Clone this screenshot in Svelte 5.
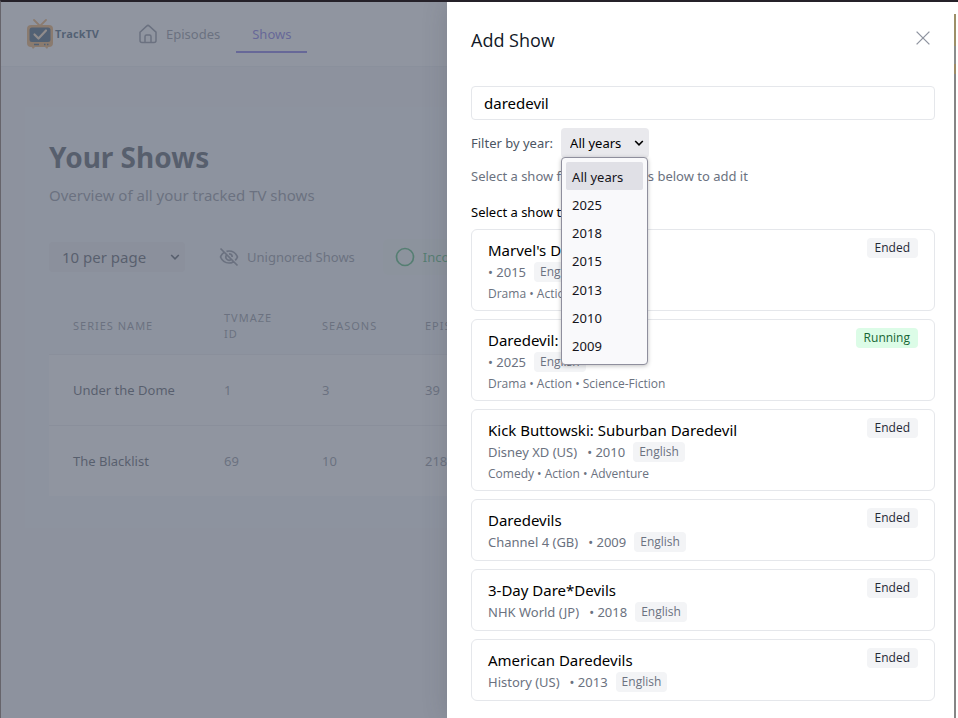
<script>
  const tracked = [
    { name: 'Under the Dome', id: 1, seasons: 3, episodes: 39 },
    { name: 'The Blacklist', id: 69, seasons: 10, episodes: 218 }
  ];
  const years = ['All years', '2025', '2018', '2015', '2013', '2010', '2009'];
  const results = [
    { title: "Marvel's Daredevil", network: '', year: 2015, status: 'Ended', genres: ['Drama', 'Action', 'Crime'] },
    { title: 'Daredevil: Born Again', network: '', year: 2025, status: 'Running', genres: ['Drama', 'Action', 'Science-Fiction'] },
    { title: 'Kick Buttowski: Suburban Daredevil', network: 'Disney XD (US)', year: 2010, status: 'Ended', genres: ['Comedy', 'Action', 'Adventure'] },
    { title: 'Daredevils', network: 'Channel 4 (GB)', year: 2009, status: 'Ended', genres: [] },
    { title: '3-Day Dare*Devils', network: 'NHK World (JP)', year: 2018, status: 'Ended', genres: [] },
    { title: 'American Daredevils', network: 'History (US)', year: 2013, status: 'Ended', genres: [] }
  ];
  let query = $state('daredevil');
  let year = $state('All years');
  let perPage = $state('10');
</script>

{#snippet chevron()}
  <svg class="chevron" viewBox="0 0 10 10" aria-hidden="true"><path d="M1.200 3l3.800 3.800L8.800 3" /></svg>
{/snippet}

<div class="app">
  <div class="page">
    <header>
      <a class="brand" href="#home">
        <svg viewBox="0 0 26 30" aria-hidden="true">
          <path d="M7 1l6 6 6-6" fill="none" stroke="#e8973f" stroke-width="1.8" stroke-linecap="round" />
          <rect x="0" y="6" width="26" height="22" rx="4" fill="#e8973f" />
          <path d="M4 27l2 3 2-2zM18 28l2 2 2-3z" fill="#e8973f" />
          <rect x="2.500" y="8.500" width="21" height="14.500" rx="2.500" fill="#0b3050" />
          <path d="M7.500 15.500l4 4 7.500-8" fill="none" stroke="#ffdcae" stroke-width="2.200" stroke-linecap="round" stroke-linejoin="round" />
          <path d="M7 25.500h5M17 25.500h1.500M20 25.500h1.500" stroke="#0b3050" stroke-width="1.400" />
        </svg>
        <span>TrackTV</span>
      </a>
      <nav>
        <a href="#episodes">
          <svg viewBox="0 0 20 20" aria-hidden="true"><path d="M2 8.200L8.600 2.100a2 2 0 0 1 2.800 0L18 8.200V16.500a2 2 0 0 1-2 2H4a2 2 0 0 1-2-2zM7 18.500V12.500a1.500 1.500 0 0 1 1.500-1.500h3a1.500 1.500 0 0 1 1.500 1.500v6" /></svg>
          Episodes
        </a>
        <a class="current" href="#shows">Shows</a>
      </nav>
    </header>
    <main>
      <h1>Your Shows</h1>
      <p class="lead">Overview of all your tracked TV shows</p>
      <div class="tools">
        <div class="select big">
          <select aria-label="Rows per page" bind:value={perPage}>
            <option value="10">10 per page</option>
            <option value="25">25 per page</option>
          </select>
          {@render chevron()}
        </div>
        <button class="tool">
          <svg viewBox="0 0 20 20" aria-hidden="true"><path d="M1.500 1.500l17 17M7.500 4.400A9 9 0 0 1 10 4c4 0 7 2.500 8.500 6a10 10 0 0 1-2.300 3.300M4.800 5.600A9.500 9.500 0 0 0 1.500 10c1.500 3.500 4.500 6 8.500 6a8.500 8.500 0 0 0 4.200-1.100M7.600 8a3.200 3.200 0 0 0 4.500 4.500M10 6.800a3.200 3.200 0 0 1 3.200 3.200" /></svg>
          Unignored Shows
        </button>
        <button class="tool green">
          <svg viewBox="0 0 20 20" aria-hidden="true"><circle cx="10" cy="10" r="8.500" /></svg>
          Incomplete
        </button>
      </div>
      <table>
        <thead>
          <tr><th class="name">Series name</th><th class="id">TVMaze ID</th><th class="seasons">Seasons</th><th>Episodes</th></tr>
        </thead>
        <tbody>
          {#each tracked as show}
            <tr><td class="title">{show.name}</td><td>{show.id}</td><td>{show.seasons}</td><td>{show.episodes}</td></tr>
          {/each}
        </tbody>
      </table>
    </main>
  </div>

  <div class="shade"></div>

  <aside class="drawer" aria-labelledby="drawer-title">
    <div class="head">
      <h2 id="drawer-title">Add Show</h2>
      <button class="close" aria-label="Close">
        <svg viewBox="0 0 14 14" aria-hidden="true"><path d="M.6.600l12.800 12.800M13.400.6L.6 13.400" /></svg>
      </button>
    </div>
    <input type="text" aria-label="Search shows" bind:value={query} />
    <div class="filter">
      <label for="year">Filter by year:</label>
      <div class="select">
        <select id="year" bind:value={year}>
          {#each years as y}<option>{y}</option>{/each}
        </select>
        {@render chevron()}
        <ul role="listbox" aria-label="Years">
          {#each years as y}<li role="option" aria-selected={y === year}>{y}</li>{/each}
        </ul>
      </div>
    </div>
    <p class="hint">Select a show from the results below to add it</p>
    <p class="prompt">Select a show to add</p>
    <div class="results">
      {#each results as r}
        <article>
          <div>
            <h3>{r.title}</h3>
            <p class="meta">
              {#if r.network}<span class="network">{r.network}</span>{/if}<span>• {r.year}</span><span class="lang">English</span>
            </p>
            {#if r.genres.length}<p class="genres">{r.genres.join(' • ')}</p>{/if}
          </div>
          <span class="badge" class:running={r.status === 'Running'}>{r.status}</span>
        </article>
      {/each}
    </div>
  </aside>
  <div class="edge"></div>
</div>

<style>
  :global(body) { margin: 0; overflow: hidden; }
  .app {
    box-sizing: border-box;
    position: relative;
    height: 100vh;
    overflow: hidden;
    border-top: 2px solid #252129;
    border-left: 1px solid #66646b;
    font-family: "Noto Sans", "Open Sans", sans-serif;
    font-size: 13px;
    line-height: 20px;
    color: #000;
  }
  h1, h2, h3, p, ul { margin: 0; padding: 0; font-weight: 400; }
  button, select, input { font: inherit; color: inherit; margin: 0; border: 0; background: none; }
  svg { fill: none; stroke: currentColor; flex: none; }

  .page { height: 100%; background: #f3f4f6; color: #6b7280; }
  header { display: flex; height: 64px; padding-left: 26px; background: #fff; border-bottom: 1px solid #e8eaee; }
  .brand { display: flex; align-items: center; gap: 2px; width: 111px; color: #0b3050; font-family: "Open Sans", sans-serif; font-size: 11px; font-weight: 700; text-decoration: none; }
  .brand svg { width: 26px; height: 30px; stroke: none; }
  nav { display: flex; gap: 16px; height: 51px; }
  nav a { display: flex; align-items: center; gap: 8px; padding-top: 15px; color: #6b7280; text-decoration: none; border-bottom: 2px solid transparent; box-sizing: border-box; }
  nav svg { width: 20px; height: 20px; stroke-width: 1.500; }
  nav .current { padding-left: 16px; padding-right: 16px; color: #5b4be0; border-color: #5b4be0; }
  main { margin: 40px 24px 0; padding: 32px 24px; background: #f3f6f9; }
  h1 { font-size: 28px; line-height: 36px; font-weight: 700; color: #1f2937; }
  .lead { margin-top: 10px; font-size: 15px; line-height: 20px; }
  .tools { display: flex; align-items: center; margin-top: 34px; height: 36px; }
  .select { position: relative; height: 30px; }
  .select select { appearance: none; height: 100%; width: 100%; border-radius: 4px; background: #e9e9ed; }
  .chevron { position: absolute; right: 5px; top: 10px; width: 10px; height: 10px; stroke-width: 1.600; pointer-events: none; }
  .big { width: 136px; color: #1f2937; font-size: 15px; }
  .big select { padding: 0 13px; }
  .tool { display: flex; align-items: center; gap: 8px; height: 36px; padding: 0 12px; margin-left: 22px; white-space: nowrap; }
  .tool svg { width: 20px; height: 20px; stroke-width: 1.700; }
  .green { margin-left: 16px; color: #16a34a; background: #eef8f2; border-radius: 6px; }
  table { width: 100%; margin-top: 23px; border-collapse: collapse; table-layout: fixed; text-align: left; }
  th { height: 56px; box-sizing: border-box; padding: 0 24px; font-size: 11px; line-height: 16px; font-weight: 400; letter-spacing: 1px; text-transform: uppercase; }
  .name { width: 151px; }
  .id { width: 98px; }
  .seasons { width: 103px; }
  td { height: 70px; padding: 0 24px; background: #fff; border-top: 1px solid #e5e7eb; }
  .title { color: #1f2937; }

  .shade { position: absolute; inset: 0; background: rgba(107, 114, 128, 0.75); }

  .drawer { position: absolute; top: 0; right: 0; bottom: 0; box-sizing: border-box; width: 511px; max-width: 100%; padding: 24px 23px 0 24px; background: #fff; box-shadow: 0 0 24px rgba(60, 60, 70, 0.2); }
  .head { display: flex; justify-content: space-between; height: 60px; }
  h2 { font-family: "Open Sans", sans-serif; font-size: 18px; line-height: 28px; color: #111827; }
  .close { width: 24px; height: 24px; padding: 0; color: #8f94a0; display: flex; align-items: center; justify-content: center; }
  .close svg { width: 14px; height: 14px; stroke-width: 1.300; }
  input { box-sizing: border-box; width: 100%; height: 34px; padding: 0 12px; border: 1px solid #e5e7eb; border-radius: 4px; font-size: 15px; }
  .filter { display: flex; align-items: center; gap: 8px; margin-top: 8px; color: #4b5563; }
  .filter .select { width: 88px; color: #000; }
  .filter select { padding: 0 9px; }
  ul { position: absolute; z-index: 1; top: 29px; left: 0; display: grid; box-sizing: border-box; width: 87px; height: 208px; padding: 4px; border: 1px solid #8f8f9d; border-radius: 4px; background: #f9f9fb; box-shadow: 0 1px 4px rgba(0, 0, 0, 0.25); list-style: none; color: #15141a; }
  li { display: flex; align-items: center; padding: 1px 6px 0; border-radius: 2px; }
  li[aria-selected="true"] { background: #e0e0e6; }
  .hint { margin-top: 8px; color: #6b7280; }
  .prompt { margin-top: 16px; }
  .results { display: flex; flex-direction: column; gap: 8px; margin-top: 7px; }
  article { display: flex; justify-content: space-between; align-items: flex-start; padding: 8px 16px; border: 1px solid #e5e7eb; border-radius: 6px; }
  h3 { font-size: 15px; line-height: 24px; }
  .meta { display: flex; height: 20px; color: #6b7280; }
  .network { margin-right: 10px; }
  .lang, .badge, .genres { font-family: "Open Sans", sans-serif; font-size: 12px; }
  .lang, .badge { padding: 0 8px; border-radius: 4px; background: #f3f4f6; }
  .lang { margin-left: 8px; padding: 0 6px; }
  .genres { margin-top: 4px; line-height: 16px; color: #6b7280; }
  .badge { color: #1f2937; }
  .running { background: #dcfce7; color: #166534; }
  .edge { position: absolute; top: 12px; right: 2px; bottom: 0; width: 2px; background: linear-gradient(#9c8f68 0 32px, #8a8d8c 32px 50px, #9c8a66 50px 60px, #858585 60px); }
</style>
